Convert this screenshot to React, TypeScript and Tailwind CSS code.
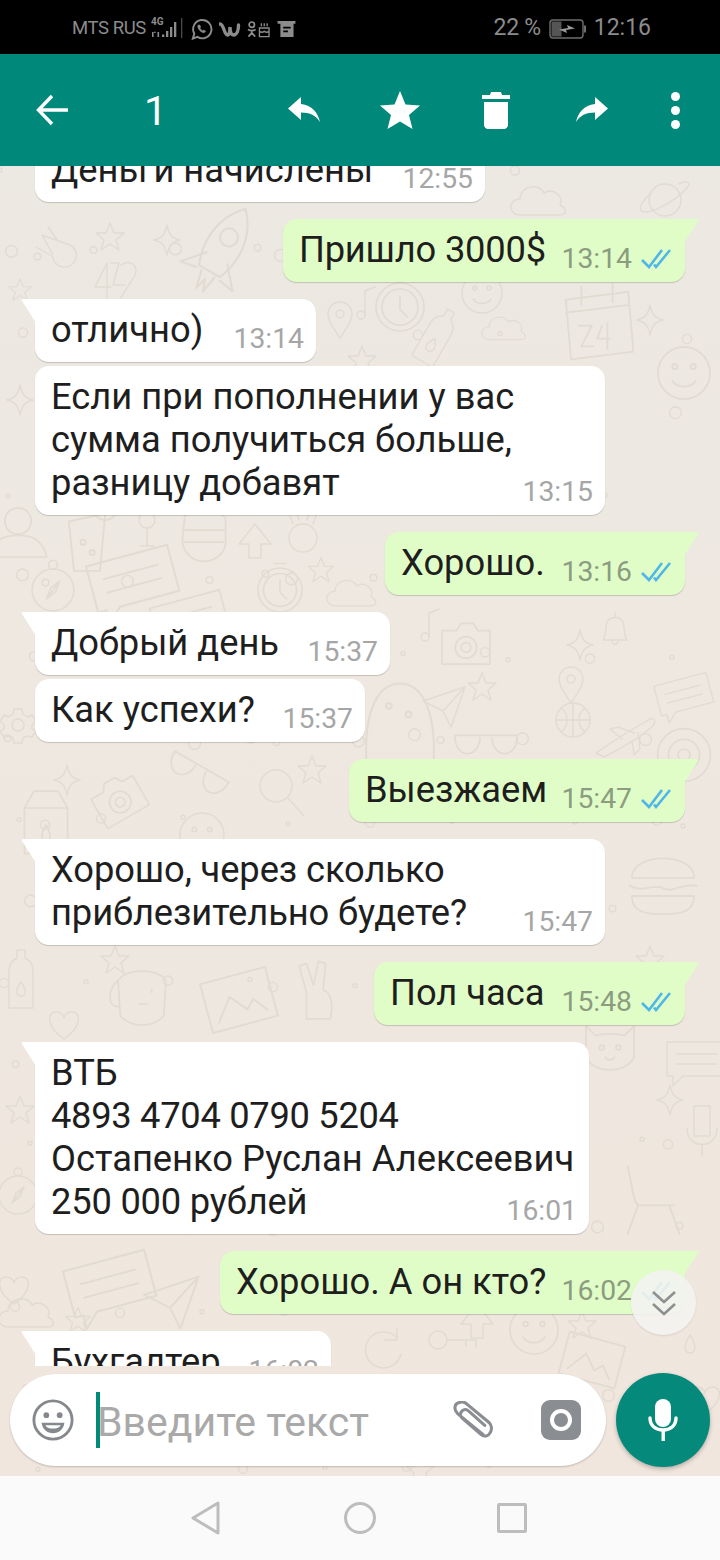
import React from "react";

const doodles: [string, number, number, number?, number?][] = [
  ["cloud", 540, 203], ["planet", 665, 200], ["rocket", 220, 253, 1.5, 30], ["n42", 115, 283], ["cal", 597, 323, 1.3], ["clock", 400, 307, 1.2],
  ["bottle", 436, 337, 1, 30], ["face", 684, 373, 1.3], ["star", 110, 237], ["spark", 167, 240], ["face", 482, 293], ["note", 367, 303],
  ["star", 362, 360], ["pin", 340, 320], ["comet", 60, 253], ["cloud", 505, 330, 0.8], ["spark", 20, 400], ["spark", 650, 320], ["star", 20, 290, 0.8],
  ["person", 18, 533, 1.2], ["drink", 87, 537, 1.3], ["glass", 147, 530], ["fist", 204, 535, 1.2], ["arrow", 255, 540], ["bunny", 303, 530],
  ["compass", 53, 590, 1.1], ["speech", 133, 580, 1.4, -15], ["clock", 280, 590, 1.1], ["star", 321, 570, 0.9], ["cloud", 353, 595, 0.9], ["speech", 190, 620, 1.2, -15],
  ["note", 431, 625], ["camera", 466, 645, 1.2], ["bell", 615, 630], ["spark", 580, 645], ["star", 482, 687], ["pin", 571, 685], ["plane", 443, 705],
  ["ball", 573, 720], ["speech", 684, 695, 0.9, -15], ["glasses", 486, 745, 1.2], ["jet", 626, 735], ["target", 684, 755, 1.2], ["gear", 18, 725], ["glasses", 197, 775, 1.2, 30],
  ["spark", 67, 780], ["magnifier", 280, 790], ["camera", 119, 800, 1.2, -30], ["milk", 46, 820, 1.2], ["face", 202, 835, 1.1], ["star", 312, 770], ["ghost", 400, 720, 1.4],
  ["burger", 663, 883, 1.3], ["dog", 142, 997, 1.2], ["photo", 239, 1000, 1.4, -15], ["peace", 316, 990, 1.2], ["heart", 64, 1025], ["bottle", 21, 980], ["star", 115, 960],
  ["cat", 610, 1050, 1.2], ["speech", 697, 1060, 1], ["compass", 18, 1195], ["chair", 651, 1195, 1.3], ["mic", 702, 1130], ["spark", 670, 1100], ["star", 20, 1110], ["star", 650, 960],
  ["speech", 110, 1285, 1.4, -15], ["plane", 170, 1300, 1.3], ["heart", 14, 1290], ["star", 78, 1320, 0.9], ["cloud", 28, 1315], ["arrow", 477, 1320], ["face", 534, 1330, 1.2],
  ["star", 582, 1325], ["refresh", 383, 1350], ["photo", 592, 1360, 1.2, 15], ["key", 454, 1340], ["drop", 690, 1345], ["drop", 640, 1440], ["star", 420, 1470], ["heart", 705, 1400],
];

// small circles sprinkled between the larger drawings
const bubbles = Array.from({ length: 150 }, (_, i) => ({
  x: (i * 137.5 + (i % 7) * 23) % 720,
  y: 170 + ((i * 211.3 + (i % 5) * 31) % 1300),
  r: 2 + (i % 4) * 1.3,
}));

function Wallpaper() {
  return (
    <svg className="absolute inset-0 h-full w-full" viewBox="0 166 720 1310" fill="none" stroke="#e1dbd1" strokeWidth={1.4} strokeLinejoin="round" strokeLinecap="round">
      <defs>
        <symbol id="star" overflow="visible"><path d="M0-14 4-4 14-4 6 3 9 13 0 7-9 13-6 3-14-4-4-4Z" /></symbol>
        <symbol id="spark" overflow="visible"><path d="M0-15C2-5 5-2 13 0 5 2 2 5 0 15-2 5-5 2-13 0-5-2-2-5 0-15Z" /></symbol>
        <symbol id="cloud" overflow="visible"><path d="M-20 12C-32 12-32-4-20-4-20-18 0-20 4-10 14-16 24-6 20 2 28 6 26 12 20 12Z" /></symbol>
        <symbol id="planet" overflow="visible"><circle r="16" /><path d="M-15-6C-28 6-26 12-20 12-10 12 8 2 20-10 28-18 22-20 14-16" /></symbol>
        <symbol id="rocket" overflow="visible"><path d="M0-34C14-20 14 0 8 14H-8C-14 0-14-20 0-34ZM-8 4-20 18-9 16M8 4 20 18 9 16M-5 16-2 28 0 20 3 28 5 16" /><circle cy="-12" r="6" /></symbol>
        <symbol id="n42" overflow="visible"><path d="M-8-20-20 4H-4M-8-20V18M-4-20H4L-2 2H10M6-18C14-24 24-18 20-8L4 18H24" /></symbol>
        <symbol id="cal" overflow="visible"><path d="M-24-18 24-24 28 22-20 28ZM-24-8 25-14M-12-28V-14M12-30V-16M-14 2H-4L-12 18H-3M4 2 0 12H10M8 0V20" /></symbol>
        <symbol id="clock" overflow="visible"><circle r="20" /><circle r="15" /><path d="M0-9V2L6 8M-5-24H5" /></symbol>
        <symbol id="compass" overflow="visible"><circle r="19" /><circle cy="-23" r="4" /><path d="M6-8-6 8 0 0ZM-2-2 6-8 2 2-6 8Z" /></symbol>
        <symbol id="bottle" overflow="visible"><path d="M-4-30H4V-22C12-18 12-12 12-6V28H-12V-6C-12-12-12-18-4-22Z" /><path d="M0 2C-6 10-5 16 0 16 5 16 6 10 0 2Z" /></symbol>
        <symbol id="face" overflow="visible"><circle r="20" /><circle cx="-7" cy="-5" r="2" /><circle cx="7" cy="-5" r="2" /><path d="M-9 6C-5 12 5 12 9 6" /></symbol>
        <symbol id="note" overflow="visible"><circle cx="-6" cy="12" r="4" /><path d="M-2 12V-12L8-16" /></symbol>
        <symbol id="pin" overflow="visible"><path d="M0 18C-8 6-12 0-12-6A12 12 0 0 1 12-6C12 0 8 6 0 18Z" /><circle cy="-6" r="4" /></symbol>
        <symbol id="comet" overflow="visible"><path d="M-18-18 10-8C22-2 16 16 2 14-6 12-8 4-8 0ZM-24-6-10 2M-12-26-2-12" /></symbol>
        <symbol id="person" overflow="visible"><circle cy="-10" r="11" /><path d="M-24 20C-20 4-10 2 0 2 10 2 20 4 24 20Z" /></symbol>
        <symbol id="drink" overflow="visible"><path d="M-14-12 14-18 10 26-10 26Z" /><circle cx="14" cy="-22" r="9" /><circle cx="-3" cy="4" r="2" /><circle cx="4" cy="12" r="2" /></symbol>
        <symbol id="glass" overflow="visible"><circle cy="-10" r="8" /><path d="M0-2V16M-7 16H7" /></symbol>
        <symbol id="fist" overflow="visible"><path d="M-16-16C-8-22 12-22 18-14V6C18 14 10 22 0 22-10 22-18 14-18 4ZM-16-4H18M-16 6H16" /></symbol>
        <symbol id="arrow" overflow="visible"><path d="M0-16 16 4 6 4 6 18-6 18-6 4-16 4Z" /></symbol>
        <symbol id="bunny" overflow="visible"><path d="M-10-6C-20-30-10-32-4-10M10-6C20-30 10-32 4-10" /><circle cy="8" r="14" /></symbol>
        <symbol id="speech" overflow="visible"><path d="M-30-18H30V16H-14L-24 26V16H-30ZM-20-6H20M-20 4H20" /></symbol>
        <symbol id="camera" overflow="visible"><path d="M-20-12H-8L-4-18H6L10-12H20V16H-20Z" /><circle cy="2" r="9" /><circle cy="2" r="4" /></symbol>
        <symbol id="bell" overflow="visible"><path d="M-12 10C-8 4-10-4-8-8-5-14 5-14 8-8 10-4 8 4 12 10ZM-3 10C-3 16 3 16 3 10M0-13V-17" /></symbol>
        <symbol id="plane" overflow="visible"><path d="M-20-4 22-18 8 22 0 6ZM0 6 22-18" /></symbol>
        <symbol id="ball" overflow="visible"><circle r="17" /><path d="M-17 0H17M0-17V17M-12-12C-4-6-4 6-12 12M12-12C4-6 4 6 12 12" /></symbol>
        <symbol id="glasses" overflow="visible"><path d="M-26-8H26M-26-8C-26 12-6 12-5-6M26-8C26 12 6 12 5-6" /></symbol>
        <symbol id="jet" overflow="visible"><path d="M-30 18C-10 4 10-8 24-16 30-18 30-12 26-8 12 4-6 14-22 22ZM-4 4-16-6-8-8 8-2M6 6 8 20 14 14 12-2" /></symbol>
        <symbol id="target" overflow="visible"><circle r="22" /><circle r="13" /><circle r="5" /></symbol>
        <symbol id="gear" overflow="visible"><circle r="6" /><path d="M-4-16H4L5-11 10-8 14-10 18-4 14 0 14 4 18 6 14 12 10 11 5 13 4 18H-4L-5 13-10 11-14 12-18 6-14 4-14 0-18-4-14-10-10-8-5-11Z" /></symbol>
        <symbol id="magnifier" overflow="visible"><circle cx="-4" cy="-4" r="16" /><path d="M8 8 24 26" /></symbol>
        <symbol id="milk" overflow="visible"><path d="M-18-10-10-24H10L18-10V28H-18ZM-18-10H18" /><path d="M0 4C-5 12-4 18 0 18 4 18 5 12 0 4Z" /></symbol>
        <symbol id="ghost" overflow="visible"><path d="M-24 30C-26-10-14-26 0-26 14-26 26-10 24 30" /><circle cx="-8" cy="-10" r="2" /><circle cx="6" cy="-4" r="2" /></symbol>
        <symbol id="burger" overflow="visible"><path d="M-24-4C-24-24 24-24 24-4ZM-26 2C-14 8-8 0 0 4 8 8 14 0 26 2M-24 10H24C24 22 14 24 0 24-14 24-24 22-24 10Z" /></symbol>
        <symbol id="dog" overflow="visible"><path d="M-20-14C-12-24 12-24 20-14L18 16C8 26-8 26-18 16Z" /><path d="M-20-14C-30-4-28 8-20 8M-2 6H4M8-6V-4" /></symbol>
        <symbol id="photo" overflow="visible"><path d="M-24-18H24V18H-24ZM-18 12-6-4 4 8 10 2 18 12" /></symbol>
        <symbol id="peace" overflow="visible"><path d="M-8 24V2L-14-20-8-22-2-4 2-24 8-22 6 0C14 2 14 14 12 24Z" /></symbol>
        <symbol id="heart" overflow="visible"><path d="M0 14C-20 0-16-14-7-13-3-13 0-9 0-7 0-9 3-13 7-13 16-14 20 0 0 14Z" /></symbol>
        <symbol id="cat" overflow="visible"><path d="M-20-20-12-12C-6-14 6-14 12-12L20-20 20 6C14 20-14 20-20 6Z" /><circle cx="-7" cy="-2" r="2" /><circle cx="7" cy="-2" r="2" /><path d="M-4 6C-2 9 2 9 4 6" /></symbol>
        <symbol id="chair" overflow="visible"><path d="M-18-22C-14-6-14 4-10 8H18M-10 8-18 30M14 8 22 30" /></symbol>
        <symbol id="mic" overflow="visible"><path d="M-8-24H8V6H-8ZM-15-2C-15 20 15 20 15-2M0 14V26" /></symbol>
        <symbol id="refresh" overflow="visible"><path d="M14-12A18 18 0 1 0 18 4M14-22V-10H2" /></symbol>
        <symbol id="key" overflow="visible"><circle cx="-16" r="9" /><path d="M-7 0H22V7M12 0V6" /></symbol>
        <symbol id="drop" overflow="visible"><path d="M0-10C-7 0-6 8 0 8 6 8 7 0 0-10Z" /></symbol>
      </defs>
      {bubbles.map((b, i) => (
        <circle key={i} cx={b.x} cy={b.y} r={b.r} />
      ))}
      {doodles.map(([name, x, y, s = 1, rot = 0], i) => (
        <use key={i} href={"#" + name} transform={`translate(${x} ${y}) rotate(${rot}) scale(${s})`} />
      ))}
    </svg>
  );
}

function Ticks() {
  return (
    <svg width="30" height="20" viewBox="0 0 30 20" fill="none" stroke="#4fb6e8" strokeWidth="2.6">
      <path d="M1 11 8 18 21 1M13 15.5 15 18 29 1" />
    </svg>
  );
}

function Bubble({ out, tail, time, width, children }: { out?: boolean; tail?: boolean; time: string; width: string; children: React.ReactNode }) {
  return (
    <div className={out ? "relative ml-auto mr-[35px]" : "relative ml-[35px]"}>
      {tail && (
        <svg className={out ? "absolute -right-[14px] top-0" : "absolute -left-[14px] top-0"} width="15" height="24" viewBox="0 0 15 24">
          <path d={out ? "M0 0H13C14 0 15 1 14 2L0 24Z" : "M15 0H2C1 0 0 1 1 2L15 24Z"} fill={out ? "#e1fdc7" : "#ffffff"} />
        </svg>
      )}
      <div
        className={`grid rounded-[14px] pb-[11px] pt-[9px] pl-[16px] text-[36.3px] leading-[43px] text-[#1e1e1e] shadow-[0_1px_1px_rgba(0,0,0,0.18)] ${width} ${
          out ? "ml-auto bg-[#e1fdc7] pr-[14px]" : "bg-white pr-[12px]"
        } ${tail && out ? "rounded-tr-none" : ""} ${tail && !out ? "rounded-tl-none" : ""}`}
      >
        <div className="col-start-1 row-start-1 whitespace-pre-line">{children}</div>
        <div className={`col-start-1 row-start-1 -mb-[4px] flex items-center gap-[9px] self-end justify-self-end text-[28.3px] leading-[32px] ${out ? "text-[#8c9c80]" : "text-[#a6a6a6]"}`}>
          {time}
          {out && <Ticks />}
        </div>
      </div>
    </div>
  );
}

function StatusBar() {
  return (
    <div className="flex h-[54px] shrink-0 items-center bg-black pl-[72px] pr-[69px] pt-[3px] text-[#8c8c8c]">
      <span className="text-[18.5px] tracking-[-0.4px]">MTS RUS</span>
      <svg className="ml-[5px]" width="32" height="24" viewBox="0 0 32 24" fill="#8c8c8c">
        <text x="0" y="8" fontSize="10" fontWeight="700">4G</text>
        <path d="M1 15h1.6v5H1zM3 16l1-2 1 2zM6.5 15h1.6v5H6.500zM11 17.500h2.300v2.500H11zM15 14h2.300v6H15zM19 10h2.300v10H19zM23 5h2.300v15H23z" />
        <path d="M30 1h1.300v20H30z" fill="#4a4a4a" />
      </svg>
      <svg className="ml-[8px]" width="22" height="22" viewBox="0 0 24 24" fill="none" stroke="#8c8c8c" strokeWidth="2.100">
        <path d="M2 22.500 3.600 17A10 10 0 1 1 7 20.600Z" />
        <path d="M8 7.500c-1 1-1 2.500.5 4.800 1.600 2.300 3.600 3.800 5.400 3.800 1 0 2-.7 2-1.800l-2.100-1.200-1 .9c-1.200-.5-2.600-2-3.100-3.100l.9-1-1-2.400Z" fill="#8c8c8c" strokeWidth="0.5" />
      </svg>
      <svg className="ml-[6px]" width="22" height="16" viewBox="0 0 22 16" fill="none" stroke="#8c8c8c" strokeWidth="3.400" strokeLinecap="round">
        <path d="M1 3C5 3 5 14 8.500 14 10.500 14 11 9 11 6 11 10 12 14 14.500 14 18 14 19.500 9 19.500 4" />
      </svg>
      <svg className="ml-[6px]" width="23" height="18" viewBox="0 0 24 18" fill="none" stroke="#8c8c8c" strokeWidth="1.800">
        <circle cx="5" cy="4.500" r="2.800" />
        <path d="M1 9.500C3.500 11 6.500 11 9 9.500M5 11v2L1.500 17M5 13 8.500 17" />
        <path d="M13 8h10v9H13zM13 11.500c2 1.500 3 1.500 5 0 2 1.500 3 1.500 5 0M15 6V3M18 6V3M21 6V3" strokeWidth="1.400" />
      </svg>
      <svg className="ml-[7px]" width="19" height="16" viewBox="0 0 19 17" fill="#8c8c8c">
        <path fillRule="evenodd" d="M0 0h19v3h-2v14H3V3H0zM6 6v2h8V6zM6 10v2h5v-2z" />
      </svg>
      <span className="ml-auto text-[23px] tracking-[-0.3px]">22 %</span>
      <svg className="ml-[8px]" width="38" height="20" viewBox="0 0 38 20" fill="none">
        <rect x="1" y="1" width="33" height="18" rx="3" stroke="#6e6e6e" strokeWidth="1.400" />
        <rect x="2.500" y="2.500" width="10" height="15" fill="#555" />
        <path d="M36 6.500v7" stroke="#6e6e6e" strokeWidth="2" />
        <path d="M10 10.500 19 9 18 6 26 9.500 17 11 18 14Z" fill="#9a9a9a" />
      </svg>
      <span className="ml-[7px] text-[23px]">12:16</span>
    </div>
  );
}

function ActionBar() {
  return (
    <div className="flex h-[112px] shrink-0 items-center bg-[#00897b] text-white">
      <svg className="ml-[36px]" width="32" height="32" viewBox="0 0 32 32" fill="none" stroke="#fff" strokeWidth="3.400">
        <path d="M32 16H3M16 2 2.500 16 16 30" />
      </svg>
      <span className="ml-[76px] mt-[3px] w-[20px] text-center text-[41px] leading-none">1</span>
      <svg className="ml-[124px]" width="32" height="26" viewBox="0 0 32 26" fill="#fff">
        <path d="M13 0 0 11.500 13 23V15.500C22 15.500 28 18.500 32 25 30 15.500 24 8.500 13 7Z" />
      </svg>
      <svg className="ml-[60px]" width="40" height="38" viewBox="0 0 40 38" fill="#fff">
        <path d="M20 0 25.500 13.500 40 14.500 29 24 32.500 38 20 30.500 7.500 38 11 24 0 14.500 14.500 13.500Z" />
      </svg>
      <svg className="ml-[62px]" width="28" height="37" viewBox="0 0 28 37" fill="#fff">
        <path d="M9 0H19L20 3H28V7H0V3H8ZM2 10H26V33C26 35 24 37 22 37H6C4 37 2 35 2 33Z" />
      </svg>
      <svg className="ml-[66px]" width="32" height="26" viewBox="0 0 32 26" fill="#fff">
        <path d="M19 0 32 11.500 19 23V15.500C10 15.500 4 18.500 0 25 2 15.500 8 8.500 19 7Z" />
      </svg>
      <div className="ml-[63px] flex flex-col gap-[5px]">
        <div className="h-[9px] w-[9px] rounded-full bg-white" />
        <div className="h-[9px] w-[9px] rounded-full bg-white" />
        <div className="h-[9px] w-[9px] rounded-full bg-white" />
      </div>
    </div>
  );
}

function Composer() {
  return (
    <div className="relative flex h-[110px] shrink-0 items-center px-[10px] pb-[2px]">
      <div className="flex h-[92px] w-[597px] items-center rounded-full bg-white pl-[22px] shadow-[0_1px_2px_rgba(0,0,0,0.2)]">
        <svg width="42" height="42" viewBox="0 0 44 44" fill="none" stroke="#85898d" strokeWidth="3">
          <circle cx="22" cy="22" r="20" />
          <circle cx="15" cy="17" r="3" fill="#85898d" stroke="none" />
          <circle cx="29" cy="17" r="3" fill="#85898d" stroke="none" />
          <path d="M10 25H34C33 32 28 36 22 36 16 36 11 32 10 25Z" fill="#85898d" stroke="none" />
          <path d="M14 27.500H30C29 30 26 31 22 31 18 31 15 30 14 27.500Z" fill="#fff" stroke="none" />
        </svg>
        <div className="ml-[22px] h-[56px] w-[4px] bg-[#008a78]" />
        <span className="ml-[-3px] mt-[4px] w-[270px] whitespace-nowrap text-[41px] leading-none text-[#a9a9a9]">Введите текст</span>
        <svg className="ml-[85px]" width="42" height="38" viewBox="0 0 46 42" fill="none" stroke="#8a8d91" strokeWidth="3.400" strokeLinecap="round">
          <path d="M34 37 6 14C1 9 3 3 7 2 11 0 14 1 17 4L41 24C44 27 44 32 42 35 40 39 36 40 32 37L11 19C8 16 9 13 11 11 13 9 16 9 18 11L36 27" />
        </svg>
        <div className="ml-[47px] flex h-[40px] w-[40px] items-center justify-center rounded-[9px] bg-[#8a8d91]">
          <div className="h-[22px] w-[22px] rounded-full border-[4px] border-white" />
        </div>
      </div>
      <div className="ml-[10px] flex h-[94px] w-[94px] shrink-0 items-center justify-center rounded-full bg-[#05897a] shadow-[0_2px_4px_rgba(0,0,0,0.25)]">
        <svg width="32" height="42" viewBox="0 0 32 42" fill="#fff">
          <rect x="8" y="0" width="16" height="28" rx="8" />
          <path d="M3 19C3 27 9 31 16 31 23 31 29 27 29 19" fill="none" stroke="#fff" strokeWidth="3.400" strokeLinecap="round" />
          <rect x="14.500" y="30" width="3.400" height="12" />
        </svg>
      </div>
    </div>
  );
}

function NavBar() {
  return (
    <div className="flex h-[84px] shrink-0 items-center bg-[#fafafa] pl-[191px]">
      <svg width="30" height="34" viewBox="0 0 30 34" fill="none" stroke="#bdbdbd" strokeWidth="3" strokeLinejoin="round">
        <path d="M27 2V32L2 17Z" />
      </svg>
      <div className="ml-[123px] h-[32px] w-[32px] rounded-full border-[3px] border-[#bdbdbd]" />
      <div className="ml-[121px] h-[30px] w-[30px] rounded-[2px] border-[3px] border-[#bdbdbd]" />
    </div>
  );
}

export default function App() {
  return (
    <div className="flex h-[1560px] w-[720px] flex-col overflow-hidden font-['Roboto',sans-serif]">
      <StatusBar />
      <ActionBar />
      <div className="relative flex min-h-0 flex-1 flex-col bg-gradient-to-b from-[#ece9e2] to-[#f0e6dd]">
        <Wallpaper />
        <div className="relative flex min-h-0 flex-1 flex-col overflow-hidden">
          <div className="-mt-[27px] flex flex-col">
            <Bubble time="12:55" width="w-[450px]">Деньги начислены</Bubble>
            <div className="mt-[17px]"><Bubble out tail time="13:14" width="w-[402px]"><span className="tracking-[-0.2px]">Пришло 3000$</span></Bubble></div>
            <div className="mt-[17px]"><Bubble tail time="13:14" width="w-[281px]">отлично)</Bubble></div>
            <div className="mt-[4px]"><Bubble time="13:15" width="w-[570px]">{"Если при пополнении у вас\nсумма получиться больше,\nразницу добавят"}</Bubble></div>
            <div className="mt-[17px]"><Bubble out tail time="13:16" width="w-[300px]">Хорошо.</Bubble></div>
            <div className="mt-[17px]"><Bubble tail time="15:37" width="w-[355px]">Добрый день</Bubble></div>
            <div className="mt-[4px]"><Bubble time="15:37" width="w-[330px]">Как успехи?</Bubble></div>
            <div className="mt-[17px]"><Bubble out tail time="15:47" width="w-[336px]">Выезжаем</Bubble></div>
            <div className="mt-[17px]"><Bubble tail time="15:47" width="w-[570px]"><span className="tracking-[-0.1px]">{"Хорошо, через сколько\nприблезительно будете?"}</span></Bubble></div>
            <div className="mt-[17px]"><Bubble out tail time="15:48" width="w-[311px]">Пол часа</Bubble></div>
            <div className="mt-[17px]">
              <Bubble tail time="16:01" width="w-[554px]">
                {"ВТБ\n"}
                <span className="tracking-[-0.3px]">4893 4704 0790 5204</span>
                {"\nОстапенко Руслан Алексеевич\n"}
                <span className="tracking-[-0.2px]">250 000 рублей</span>
              </Bubble>
            </div>
            <div className="mt-[17px]"><Bubble out tail time="16:02" width="w-[465px]">Хорошо. А он кто?</Bubble></div>
            <div className="mt-[17px]"><Bubble tail time="16:02" width="w-[296px]">Бухгалтер</Bubble></div>
          </div>
        </div>
        <Composer />
        {/* scroll-to-bottom button over the last messages */}
        <div className="absolute left-[631px] top-[1104px] flex h-[65px] w-[65px] items-center justify-center rounded-full bg-[#f3f3ef]/90 shadow-[0_1px_2px_rgba(0,0,0,0.1)]">
          <svg width="26" height="28" viewBox="0 0 26 28" fill="none" stroke="#8f8f8f" strokeWidth="2.600">
            <path d="M2 3 13 13 24 3M2 15 13 25 24 15" />
          </svg>
        </div>
      </div>
      <NavBar />
    </div>
  );
}
